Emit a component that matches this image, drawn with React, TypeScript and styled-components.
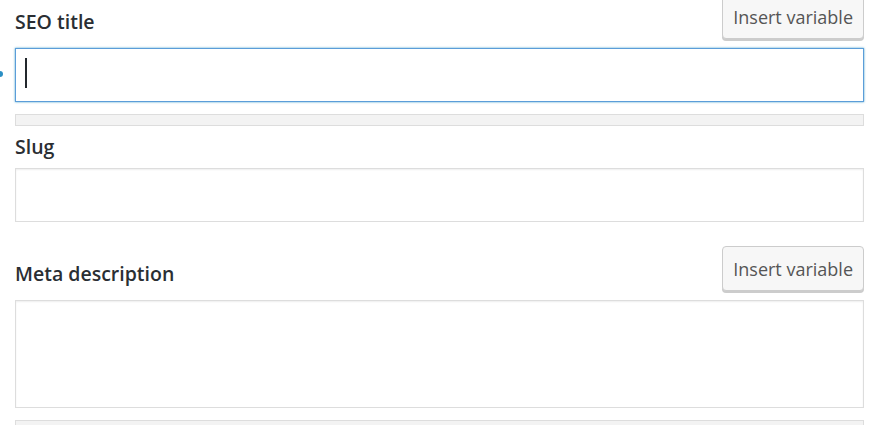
import styled, { createGlobalStyle } from 'styled-components';

const GlobalStyle = createGlobalStyle`
  body {
    margin: 0;
    background: #fff;
    font-family: "Open Sans", "Noto Sans", sans-serif;
    overflow: hidden;
  }
`;

const App = () => {
  return (
    <>
      <GlobalStyle />
      <Page>
        <FocusMarker />
        <Field>
          <FieldHeader hasButton>
            <Label>SEO title</Label>
            <InsertButton type="button">Insert variable</InsertButton>
          </FieldHeader>
          <InputWrap>
            <TextInput focused aria-label="SEO title" />
            <Caret />
          </InputWrap>
          <ProgressBar />
        </Field>
        <Field>
          <FieldHeader>
            <Label>Slug</Label>
          </FieldHeader>
          <TextInput aria-label="Slug" />
        </Field>
        <Field spaced>
          <FieldHeader hasButton>
            <Label>Meta description</Label>
            <InsertButton type="button">Insert variable</InsertButton>
          </FieldHeader>
          <TextArea aria-label="Meta description" />
          <ProgressBar />
        </Field>
      </Page>
    </>
  );
};

const Page = styled.div`
  position: relative;
  margin-top: -6px;
  padding: 0 17px 0 15px;
  display: flex;
  flex-direction: column;
`;

const FocusMarker = styled.span`
  position: absolute;
  left: -3px;
  top: 77px;
  width: 6px;
  height: 6px;
  border-radius: 50%;
  background: #2b8fc4;
`;

const Field = styled.div<{ spaced?: boolean }>`
  display: flex;
  flex-direction: column;
  margin-top: ${({ spaced }) => (spaced ? '24px' : '0')};
`;

const FieldHeader = styled.div<{ hasButton?: boolean }>`
  display: flex;
  justify-content: space-between;
  align-items: flex-end;
  margin: ${({ hasButton }) => (hasButton ? '0 0 8px' : '8px 0 8px')};

  & > label {
    margin-bottom: ${({ hasButton }) => (hasButton ? '5px' : '0')};
  }
`;

const Label = styled.label`
  display: block;
  font-size: 19.5px;
  line-height: 26px;
  font-weight: 600;
  color: #2a2e33;
`;

const InsertButton = styled.button`
  height: 45px;
  padding: 0 10px;
  margin-bottom: 1px;
  border: 1px solid #cccccc;
  border-radius: 4px;
  background: #f7f7f7;
  box-shadow: 0 2px 0 #cccccc;
  font-family: "Open Sans", "Noto Sans", sans-serif;
  font-size: 18px;
  color: #555555;
  cursor: pointer;
`;

const InputWrap = styled.div`
  position: relative;
  display: flex;
`;

const TextInput = styled.input<{ focused?: boolean }>`
  box-sizing: border-box;
  width: 100%;
  height: 54px;
  margin: 0;
  padding: 0 10px;
  border: 1px solid ${({ focused }) => (focused ? '#5b9dd9' : '#dddddd')};
  border-radius: 0;
  background: #fff;
  box-shadow: ${({ focused }) =>
    focused ? '0 0 2px rgba(30, 140, 190, 0.8)' : 'inset 0 1px 2px rgba(0, 0, 0, 0.07)'};
  outline: none;
  font-family: inherit;
  font-size: 18px;
`;

const Caret = styled.span`
  position: absolute;
  left: 10px;
  top: 10px;
  width: 2px;
  height: 30px;
  background: #23282d;
`;

const TextArea = styled.textarea`
  box-sizing: border-box;
  width: 100%;
  height: 108px;
  margin: 0;
  padding: 8px 10px;
  border: 1px solid #dddddd;
  border-radius: 0;
  background: #fff;
  box-shadow: inset 0 1px 2px rgba(0, 0, 0, 0.07);
  resize: none;
  outline: none;
  font-family: inherit;
  font-size: 18px;
`;

const ProgressBar = styled.div`
  box-sizing: border-box;
  height: 12px;
  margin-top: 12px;
  border: 1px solid #dddddd;
  background: #f3f3f3;
`;

export default App;
